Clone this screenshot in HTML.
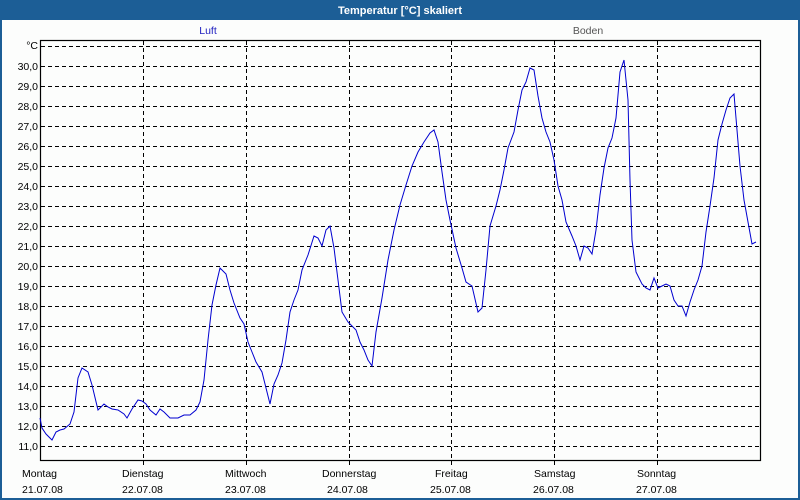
<!DOCTYPE html>
<html><head><meta charset="utf-8"><style>
html,body{margin:0;padding:0;width:800px;height:500px;overflow:hidden;background:#fff}
</style></head><body>
<svg width="800" height="500" xmlns="http://www.w3.org/2000/svg" font-family="Liberation Sans, sans-serif" font-size="10.5">
<rect x="0" y="0" width="800" height="500" fill="#1c5e96"/>
<rect x="2" y="20" width="796" height="478" fill="#fcfdfc"/>
<text x="400" y="14" text-anchor="middle" fill="#fff" font-weight="bold" font-size="11">Temperatur [°C] skaliert</text>
<text x="208" y="34" text-anchor="middle" fill="#2020c0">Luft</text>
<text x="588" y="34" text-anchor="middle" fill="#555">Boden</text>
<g stroke="#000" stroke-width="1" stroke-dasharray="4,3" fill="none">
<path d="M41 46.5H761M41 66.5H761M41 86.5H761M41 106.5H761M41 126.5H761M41 146.5H761M41 166.5H761M41 186.5H761M41 206.5H761M41 226.5H761M41 246.5H761M41 266.5H761M41 286.5H761M41 306.5H761M41 326.5H761M41 346.5H761M41 366.5H761M41 386.5H761M41 406.5H761M41 426.5H761M41 446.5H761"/>
<path d="M143.5 41V466M246.5 41V466M349.5 41V466M451.5 41V466M554.5 41V466M657.5 41V466"/>
</g>
<rect x="40.5" y="40.5" width="720" height="420" fill="none" stroke="#000" stroke-width="1.2"/>
<g text-anchor="end" fill="#000">
<text x="38" y="49">°C</text>
<text x="38" y="70">30,0</text><text x="38" y="90">29,0</text><text x="38" y="110">28,0</text><text x="38" y="130">27,0</text><text x="38" y="150">26,0</text><text x="38" y="170">25,0</text><text x="38" y="190">24,0</text><text x="38" y="210">23,0</text><text x="38" y="230">22,0</text><text x="38" y="250">21,0</text><text x="38" y="270">20,0</text><text x="38" y="290">19,0</text><text x="38" y="310">18,0</text><text x="38" y="330">17,0</text><text x="38" y="350">16,0</text><text x="38" y="370">15,0</text><text x="38" y="390">14,0</text><text x="38" y="410">13,0</text><text x="38" y="430">12,0</text><text x="38" y="450">11,0</text>
</g>
<g fill="#000">
<text x="22" y="477">Montag</text><text x="22" y="493">21.07.08</text>
<text x="122" y="477">Dienstag</text><text x="122" y="493">22.07.08</text>
<text x="225" y="477">Mittwoch</text><text x="225" y="493">23.07.08</text>
<text x="322" y="477">Donnerstag</text><text x="327" y="493">24.07.08</text>
<text x="435" y="477">Freitag</text><text x="430" y="493">25.07.08</text>
<text x="534" y="477">Samstag</text><text x="533" y="493">26.07.08</text>
<text x="637" y="477">Sonntag</text><text x="636" y="493">27.07.08</text>
</g>
<polyline fill="none" stroke="#0000d0" stroke-width="1" points="40,418 42,428 46,434 52,440 56,432 60,430 64,429 70,424 74,412 78,378 82,368 88,372 92,385 98,410 104,404 108,407 112,409 118,410 124,414 127,418 132,409 138,400 142,401 146,404 150,410 156,415 160,409 164,412 170,418 178,418 184,415 190,415 196,410 200,402 204,380 208,340 212,305 216,285 220,268 226,274 230,290 234,303 240,318 244,324 248,342 252,352 256,362 262,372 266,388 270,404 274,384 278,375 282,363 286,340 290,312 294,300 298,290 302,270 308,255 314,236 318,238 322,246 326,230 330,226 334,248 338,280 342,312 348,322 352,326 356,330 360,342 364,350 368,360 372,366 376,332 382,298 388,260 394,230 400,205 406,185 412,166 418,152 424,142 430,133 434,130 438,142 442,172 446,200 450,220 456,248 462,268 466,282 472,286 478,312 482,308 486,270 490,226 496,206 500,190 504,170 508,148 514,132 518,110 522,90 526,82 530,68 534,70 538,96 542,118 546,132 550,142 554,160 558,186 562,200 566,222 572,236 576,246 580,260 584,246 588,248 592,254 596,230 600,195 604,168 608,148 612,138 616,118 620,72 624,60 628,100 630,180 632,240 636,272 642,284 646,288 650,290 654,278 658,288 662,286 666,284 670,286 674,300 678,306 682,306 686,316 690,302 694,290 698,280 702,266 706,232 710,206 714,178 718,140 722,124 726,110 730,98 734,94 736,118 740,166 744,200 748,222 752,244 756,242"/>
</svg>
</body></html>
